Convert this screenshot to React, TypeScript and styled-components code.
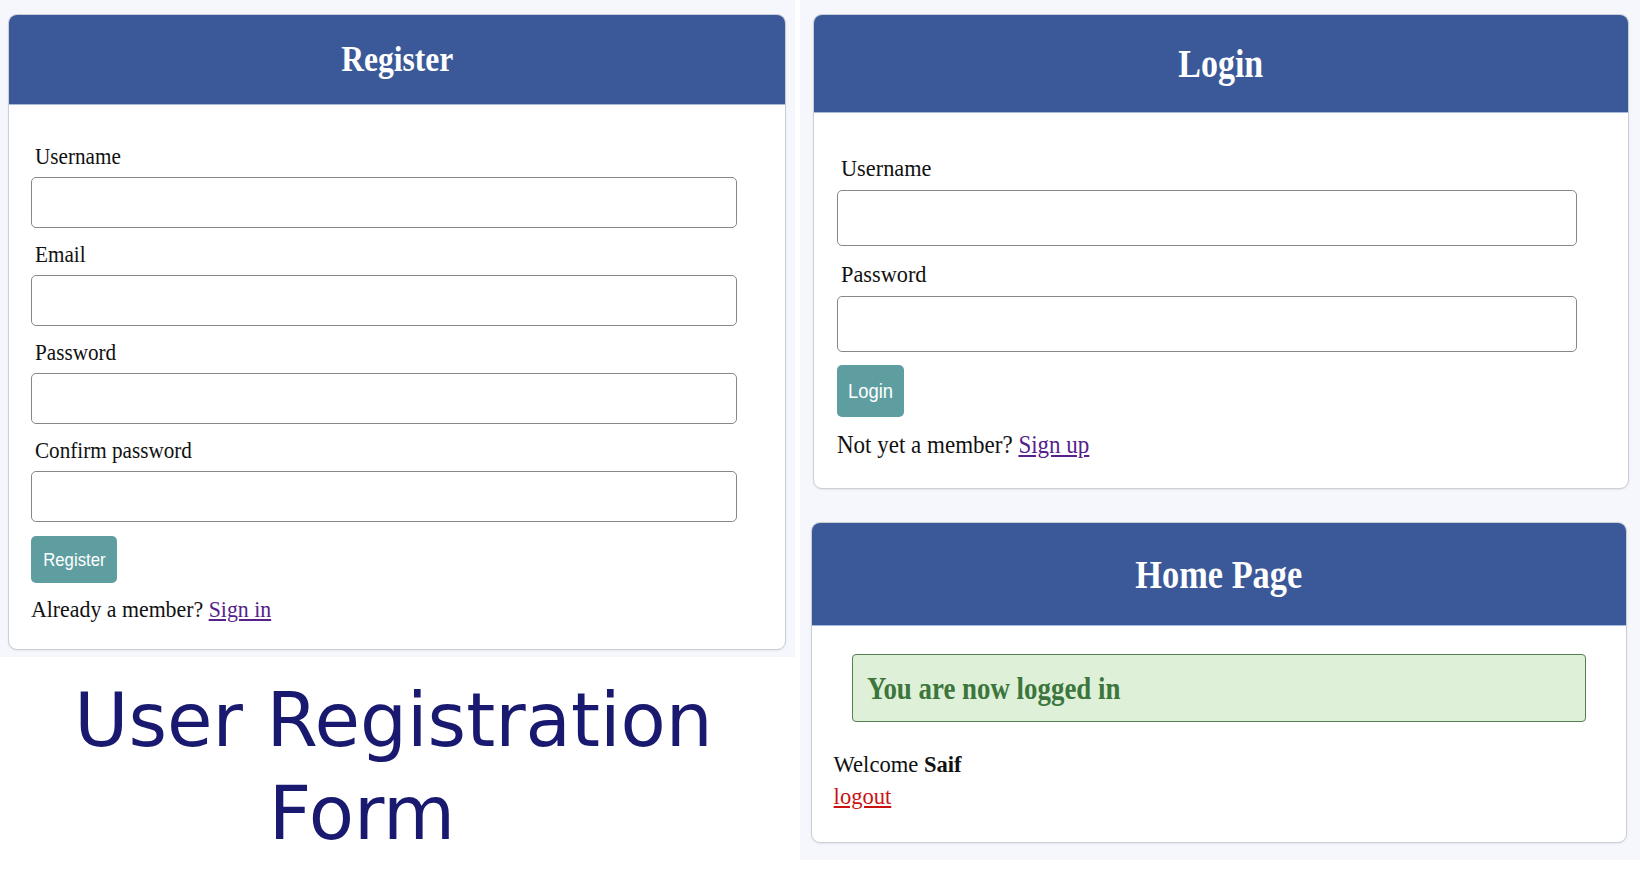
import { type FC } from 'react'
import styled, { createGlobalStyle, ThemeProvider } from 'styled-components'

type Metrics = {
    headerH: number
    titleSize: number
    titleSx: number
    padTop: number
    padX: number
    padBottom: number
    labelSize: number
    labelSx: number
    labelGap: number
    fieldGap: number
    inputW: number
    inputH: number
    btnW: number
    btnH: number
    btnSize: number
    btnSx: number
    btnGap: number
    noteSize: number
    noteSx: number
    noteLh: number
    noteGap: number
}

declare module 'styled-components' {
    export interface DefaultTheme extends Metrics {}
}

const registerMetrics: Metrics = {
    headerH: 90,
    titleSize: 35,
    titleSx: 0.9,
    padTop: 39,
    padX: 22,
    padBottom: 26,
    labelSize: 23,
    labelSx: 0.92,
    labelGap: 7,
    fieldGap: 14,
    inputW: 706,
    inputH: 51,
    btnW: 86,
    btnH: 47,
    btnSize: 19,
    btnSx: 0.88,
    btnGap: 0,
    noteSize: 24,
    noteSx: 0.91,
    noteLh: 27,
    noteGap: 13,
}

const loginMetrics: Metrics = {
    headerH: 98,
    titleSize: 39,
    titleSx: 0.87,
    padTop: 43,
    padX: 23,
    padBottom: 29,
    labelSize: 23,
    labelSx: 0.97,
    labelGap: 8,
    fieldGap: 16,
    inputW: 740,
    inputH: 56,
    btnW: 67,
    btnH: 52,
    btnSize: 20,
    btnSx: 0.92,
    btnGap: -3,
    noteSize: 25,
    noteSx: 0.92,
    noteLh: 28,
    noteGap: 14,
}

const homeMetrics: Metrics = {
    ...loginMetrics,
    headerH: 103,
    titleSize: 39,
    titleSx: 0.88,
}

const GlobalStyle = createGlobalStyle`
    * {
        box-sizing: border-box;
    }

    html,
    body {
        margin: 0;
        padding: 0;
        background: #ffffff;
    }

    body {
        font-family: 'Liberation Serif', 'Times New Roman', serif;
        color: #111111;
    }
`

const Page = styled.main`
    display: grid;
    grid-template-columns: 795px 840px;
    column-gap: 5px;
    align-items: start;
    width: 1640px;
`

const Column = styled.section`
    display: flex;
    flex-direction: column;
`

const Panel = styled.div<{ $pad: string; $gap?: number }>`
    display: flex;
    flex-direction: column;
    gap: ${({ $gap }) => $gap ?? 0}px;
    padding: ${({ $pad }) => $pad};
    background: #f5f7fc;
`

const Card = styled.article<{ $left?: number; $width?: number }>`
    margin-left: ${({ $left }) => $left ?? 0}px;
    width: ${({ $width }) => ($width ? `${$width}px` : 'auto')};
    background: #ffffff;
    border: 1px solid #c9ced7;
    border-radius: 9px;
    overflow: hidden;
    box-shadow: 0 1px 2px rgba(20, 30, 60, 0.08);
`

const CardHeader = styled.header`
    display: flex;
    align-items: center;
    justify-content: center;
    height: ${({ theme }) => theme.headerH}px;
    background: #3b5998;
    border-bottom: 1px solid #a6b9df;
`

const CardTitle = styled.h2`
    margin: 0;
    font-size: ${({ theme }) => theme.titleSize}px;
    line-height: 1;
    font-weight: 700;
    color: #ffffff;
    transform: scaleX(${({ theme }) => theme.titleSx});
`

const Form = styled.form`
    display: flex;
    flex-direction: column;
    align-items: flex-start;
    padding: ${({ theme }) => `${theme.padTop}px ${theme.padX}px ${theme.padBottom}px`};
`

const Field = styled.div`
    display: flex;
    flex-direction: column;
    margin-bottom: ${({ theme }) => theme.fieldGap}px;
`

const Label = styled.label`
    display: block;
    margin: 0 0 ${({ theme }) => theme.labelGap}px 4px;
    font-size: ${({ theme }) => theme.labelSize}px;
    line-height: 26px;
    white-space: nowrap;
    transform: scaleX(${({ theme }) => theme.labelSx});
    transform-origin: left center;
`

const Input = styled.input`
    width: ${({ theme }) => theme.inputW}px;
    height: ${({ theme }) => theme.inputH}px;
    padding: 0 12px;
    border: 1px solid #878787;
    border-radius: 5px;
    background: #ffffff;
    font: inherit;
`

const Button = styled.button`
    display: flex;
    align-items: center;
    justify-content: center;
    width: ${({ theme }) => theme.btnW}px;
    height: ${({ theme }) => theme.btnH}px;
    margin-top: ${({ theme }) => theme.btnGap}px;
    padding: 0;
    border: none;
    border-radius: 5px;
    background: #5f9ea0;
    color: #ffffff;
    font-family: 'Liberation Sans', Arial, sans-serif;
    font-size: ${({ theme }) => theme.btnSize}px;
`

const ButtonText = styled.span`
    display: inline-block;
    transform: scaleX(${({ theme }) => theme.btnSx});
`

const Note = styled.p`
    margin: ${({ theme }) => theme.noteGap}px 0 0;
    font-size: ${({ theme }) => theme.noteSize}px;
    line-height: ${({ theme }) => theme.noteLh}px;
    white-space: nowrap;
    transform: scaleX(${({ theme }) => theme.noteSx});
    transform-origin: left center;
`

const Link = styled.a<{ $tone?: 'visited' | 'danger' }>`
    color: ${({ $tone }) => ($tone === 'danger' ? '#cc1111' : '#56228a')};
    text-decoration: underline;
`

const Alert = styled.div`
    display: flex;
    align-items: center;
    height: 68px;
    margin: 28px 40px 0 40px;
    padding-left: 14px;
    border: 1px solid #557f55;
    border-radius: 4px;
    background: #dff0d8;
    color: #3c763d;
`

const AlertText = styled.h3`
    margin: 0;
    font-size: 32px;
    line-height: 1;
    font-weight: 700;
    white-space: nowrap;
    transform: scaleX(0.84);
    transform-origin: left center;
`

const Greeting = styled.div`
    padding: 26px 23px 30px;
    font-size: 24px;
    line-height: 32px;
    transform: scaleX(0.94);
    transform-origin: left center;

    p {
        margin: 0;
    }
`

const BigTitle = styled.h1`
    margin: 17px 0 0;
    font-family: 'DejaVu Sans', 'Liberation Sans', sans-serif;
    font-weight: 400;
    font-size: 74px;
    line-height: 93px;
    color: #191970;
    text-align: center;
`

const TitleLine = styled.span<{ $shift: number }>`
    display: block;
    padding-right: ${({ $shift }) => $shift}px;
`

type FieldDef = { id: string; label: string; type: string }

const registerFields: FieldDef[] = [
    { id: 'reg-username', label: 'Username', type: 'text' },
    { id: 'reg-email', label: 'Email', type: 'email' },
    { id: 'reg-password', label: 'Password', type: 'password' },
    { id: 'reg-confirm', label: 'Confirm password', type: 'password' },
]

const loginFields: FieldDef[] = [
    { id: 'login-username', label: 'Username', type: 'text' },
    { id: 'login-password', label: 'Password', type: 'password' },
]

type AuthCardProps = {
    title: string
    fields: FieldDef[]
    action: string
    prompt: string
    linkText: string
    left?: number
    width?: number
}

const AuthCard: FC<AuthCardProps> = ({ title, fields, action, prompt, linkText, left, width }) => (
    <Card $left={left} $width={width}>
        <CardHeader>
            <CardTitle>{title}</CardTitle>
        </CardHeader>
        <Form onSubmit={(e) => e.preventDefault()}>
            {fields.map((f) => (
                <Field key={f.id}>
                    <Label htmlFor={f.id}>{f.label}</Label>
                    <Input id={f.id} name={f.id} type={f.type} />
                </Field>
            ))}
            <Button type='submit'>
                <ButtonText>{action}</ButtonText>
            </Button>
            <Note>
                {prompt} <Link href='#'>{linkText}</Link>
            </Note>
        </Form>
    </Card>
)

export default function App() {
    return (
        <>
            <GlobalStyle />
            <Page>
                <Column>
                    <Panel $pad='14px 9px 7px 8px'>
                        <ThemeProvider theme={registerMetrics}>
                            <AuthCard
                                title='Register'
                                fields={registerFields}
                                action='Register'
                                prompt='Already a member?'
                                linkText='Sign in'
                            />
                        </ThemeProvider>
                    </Panel>
                    <BigTitle>
                        <TitleLine $shift={8}>User Registration</TitleLine>
                        <TitleLine $shift={71}>Form</TitleLine>
                    </BigTitle>
                </Column>
                <Panel $pad='14px 0 17px' $gap={33}>
                    <ThemeProvider theme={loginMetrics}>
                        <AuthCard
                            title='Login'
                            fields={loginFields}
                            action='Login'
                            prompt='Not yet a member?'
                            linkText='Sign up'
                            left={13}
                            width={816}
                        />
                    </ThemeProvider>
                    <ThemeProvider theme={homeMetrics}>
                        <Card $left={11} $width={816}>
                            <CardHeader>
                                <CardTitle>Home Page</CardTitle>
                            </CardHeader>
                            <Alert>
                                <AlertText>You are now logged in</AlertText>
                            </Alert>
                            <Greeting>
                                <p>
                                    Welcome <strong>Saif</strong>
                                </p>
                                <Link href='#' $tone='danger'>
                                    logout
                                </Link>
                            </Greeting>
                        </Card>
                    </ThemeProvider>
                </Panel>
            </Page>
        </>
    )
}
